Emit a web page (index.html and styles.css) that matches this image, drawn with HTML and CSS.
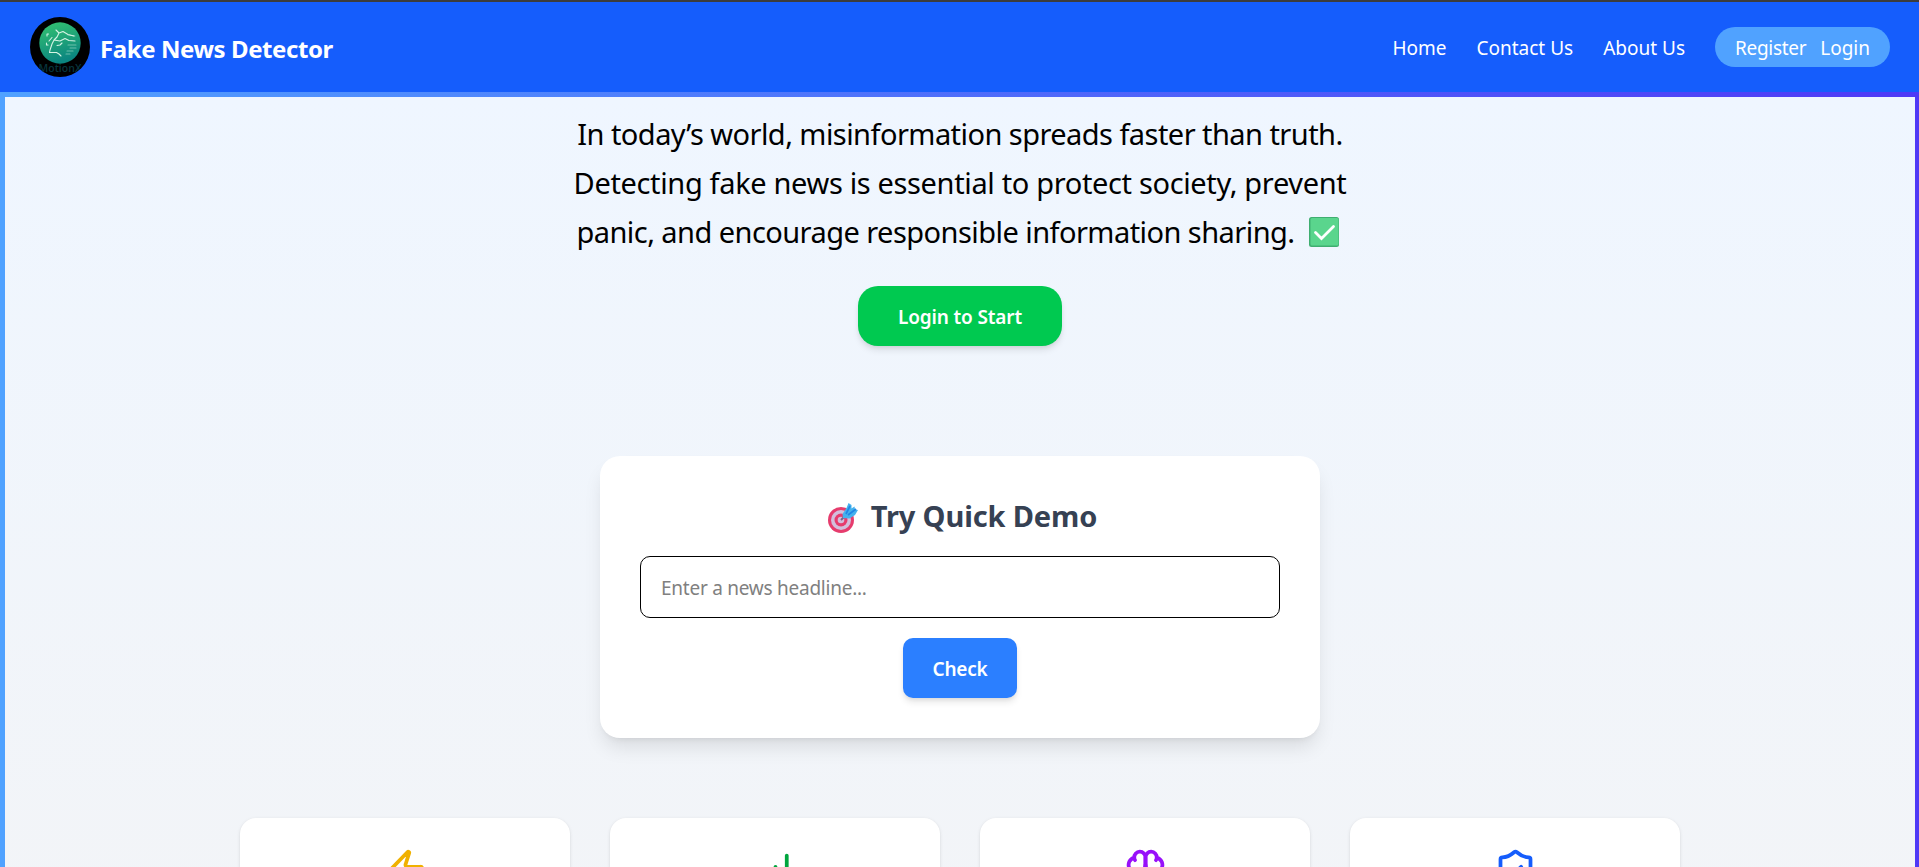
FILE: index.html
```html
<!DOCTYPE html>
<html lang="en">
<head>
<meta charset="utf-8">
<title>Fake News Detector</title>
<link rel="stylesheet" href="styles.css">
</head>
<body>
<nav class="nav">
  <div class="brand">
    <svg class="logo" viewBox="0 0 60 60">
      <defs>
        <linearGradient id="lg" x1="0" y1="0" x2="0.3" y2="1"><stop offset="0" stop-color="#35c46f"/><stop offset="1" stop-color="#0b8680"/></linearGradient>
        <clipPath id="round"><circle cx="30" cy="30" r="30"/></clipPath>
      </defs>
      <g clip-path="url(#round)">
        <rect width="60" height="60" fill="#000"/>
        <circle cx="30" cy="26" r="20.700" fill="url(#lg)"/>
        <g fill="none" stroke="#d4f3e4" stroke-width="1.100" stroke-linecap="round" stroke-linejoin="round">
          <path d="M26 13l3 3 4-1.500 5 3 6 1.500M29 16l-2 4-3 3M24 23l6 1 5-2.500 4 2 6 .5M22 20.500l-3 3.500M17 19v-2h1.500M16.500 26v2h1.500M24 23l-2 4-2 6-.5 2.500h7l2.500 1.500 2 2M27 28.500l3-.5 2-2"/>
          <path d="M38 18l7 1M38 28h8M40 31h6M37 34h6M36 37h4" opacity=".45"/>
        </g>
        <text class="logo-text" x="30" y="55" text-anchor="middle" textLength="43">MotionX</text>
      </g>
    </svg>
    <span class="brand-name">Fake News Detector</span>
  </div>
  <div class="links">
    <a class="link">Home</a><a class="link">Contact Us</a><a class="link">About Us</a>
    <div class="pill"><a class="link register">Register</a><a class="link">Login</a></div>
  </div>
</nav>
<main class="frame">
  <div class="page">
    <section class="hero">
      <p class="lead"><span class="line l1">In today’s world, misinformation spreads faster than truth.</span><span class="line l2">Detecting fake news is essential to protect society, prevent</span><span class="line l3">panic, and encourage responsible information sharing.<svg class="check" viewBox="0 0 30 30"><rect width="30" height="30" rx="2.500" fill="#3fae70"/><rect x="1.500" y="1" width="28" height="27.500" rx="1.500" fill="#5ad58d"/><path d="M6.500 15.500l6 6 12-12" fill="none" stroke="#fff" stroke-width="2.800" stroke-linecap="round"/></svg></span></p>
      <button class="start">Login to Start</button>
    </section>
    <section class="demo">
      <h2 class="demo-title">
        <svg class="target" viewBox="0 0 30 30"><circle cx="13" cy="17" r="13" fill="#e63c6d"/><circle cx="13" cy="17" r="10" fill="#d3bfdc"/><circle cx="13" cy="17" r="6.500" fill="#e63c6d"/><circle cx="13" cy="17" r="3.300" fill="#d3bfdc"/><path d="M13 17l5-5" stroke="#76648c" stroke-width="2"/><path d="M15 15l-.5-4 4-6 2-5 3 2v3.500l3-2 .5 3 3 .5-3 5-5.500 3.500z" fill="#45b2ed"/><path d="M18 11l4-8M20 12l8-6" stroke="#2086e5" stroke-width="1.700"/></svg>
        <span>Try Quick Demo</span></h2>
      <input class="field" type="text" placeholder="Enter a news headline...">
      <button class="check-btn">Check</button>
    </section>
    <section class="features">
      <div class="card"><svg class="icon yellow" viewBox="0 0 24 24"><path d="M4 14a1 1 0 0 1-.78-1.630l9.900-10.200a.5.5 0 0 1 .86.460l-1.920 6.020A1 1 0 0 0 13 10h7a1 1 0 0 1 .78 1.630l-9.900 10.200a.5.5 0 0 1-.86-.460l1.920-6.020A1 1 0 0 0 11 14z"/></svg></div>
      <div class="card"><svg class="icon green" viewBox="0 0 24 24"><path d="M12 20V10M18 20V4M6 20v-4"/></svg></div>
      <div class="card"><svg class="icon purple" viewBox="0 0 24 24"><path d="M12 5a3 3 0 1 0-5.997.125 4 4 0 0 0-2.526 5.770 4 4 0 0 0 .556 6.588A4 4 0 1 0 12 18Z"/><path d="M12 5a3 3 0 1 1 5.997.125 4 4 0 0 1 2.526 5.770 4 4 0 0 1-.556 6.588A4 4 0 1 1 12 18Z"/><path d="M15 13a4.500 4.500 0 0 1-3-4 4.500 4.500 0 0 1-3 4M17.599 6.500a3 3 0 0 0 .399-1.375M6.003 5.125A3 3 0 0 0 6.401 6.500"/></svg></div>
      <div class="card"><svg class="icon blue" viewBox="0 0 24 24"><path d="M20 13c0 5-3.500 7.500-7.660 8.950a1 1 0 0 1-.67-.010C7.500 20.500 4 18 4 13V6a1 1 0 0 1 1-1c2 0 4.500-1.200 6.240-2.720a1.170 1.170 0 0 1 1.520 0C14.510 3.810 17 5 19 5a1 1 0 0 1 1 1z"/><path d="m9 12 2 2 4-4"/></svg></div>
    </section>
  </div>
</main>
</body>
</html>
```
FILE: styles.css
```css
* { box-sizing: border-box; }
html { height: 100%; overflow: hidden; }
body { margin: 0; height: 100%; overflow: hidden; display: flex; flex-direction: column; font-family: "Noto Sans", "Open Sans", sans-serif; }
.nav { height: 92px; flex: none; border-top: 2px solid #3c3c3c; background: #155dfc; padding: 0 29px 0 30px; display: flex; align-items: center; justify-content: space-between; color: #fff; }
.brand { display: flex; align-items: center; gap: 10px; }
.logo { width: 60px; height: 60px; display: block; }
.logo-text { font: 600 10.500px "Open Sans", sans-serif; fill: #07343c; }
.brand-name { font-size: 24px; font-weight: 700; letter-spacing: -0.420px; white-space: nowrap; padding-top: 2px; }
.links { display: flex; align-items: center; gap: 30px; }
.link { font-size: 19px; line-height: 30px; white-space: nowrap; padding-top: 2px; }
.register { letter-spacing: -0.300px; }
.pill { width: 175px; height: 40px; padding: 0 20px; border-radius: 20px; background: #50a2ff; display: flex; align-items: center; justify-content: space-between; }
.frame { flex: 1; min-height: 0; overflow: hidden; padding: 5px 4px 0 5px; background: linear-gradient(to right, #50a2ff, #4f39f6); }
.page { height: 100%; overflow: hidden; background: linear-gradient(#eff6ff, #f3f4f6 960px); display: flex; flex-direction: column; align-items: center; }
.hero { flex: none; display: flex; flex-direction: column; align-items: center; padding-top: 13px; }
.lead { margin: 0; font-size: 29px; text-align: center; color: #000; }
.line { display: block; height: 48.750px; line-height: 48.750px; white-space: nowrap; }
.l1 { letter-spacing: -0.550px; }
.l2 { letter-spacing: -0.350px; }
.l3 { letter-spacing: -0.550px; }
.check { width: 30px; height: 30px; vertical-align: -4px; margin: 0 5px 0 14px; }
.start { margin-top: 29.750px; width: 204px; height: 60px; border: 0; border-radius: 20px; background: #00c950; color: #fff; padding: 1px 0 0; font: 600 19px "Noto Sans", sans-serif; letter-spacing: -0.150px; box-shadow: 0 5px 7.500px -1.250px rgba(0,0,0,.1), 0 2.500px 5px -2.500px rgba(0,0,0,.1); }
.demo { flex: none; margin-top: 110px; width: 720px; height: 282px; background: #fff; border-radius: 20px; padding: 40px; display: flex; flex-direction: column; align-items: center; box-shadow: 0 12.500px 18.750px -3.750px rgba(0,0,0,.1), 0 5px 7.500px -5px rgba(0,0,0,.1); }
.demo-title { margin: 0 0 20px; padding: 0 0 0 5px; height: 40px; display: flex; align-items: center; gap: 13px; font-size: 29px; line-height: 38px; letter-spacing: -0.130px; color: #364153; white-space: nowrap; }
.target { width: 30px; height: 30px; margin-top: 3px; }
.field { width: 640px; height: 62px; flex: none; border: 1px solid #000; border-radius: 10px; background: #fff; padding: 1px 20px 0; font: 19px "Noto Sans", sans-serif; letter-spacing: -0.250px; }
.field::placeholder { color: #808080; }
.check-btn { margin-top: 20px; width: 114px; height: 60px; flex: none; border: 0; border-radius: 10px; background: #2b7fff; color: #fff; padding: 1px 0 0; font: 600 19px "Noto Sans", sans-serif; letter-spacing: -0.200px; box-shadow: 0 5px 7.500px -1.250px rgba(0,0,0,.1), 0 2.500px 5px -2.500px rgba(0,0,0,.1); }
.features { flex: none; margin-top: 80px; display: grid; grid-template-columns: repeat(4, 330px); gap: 40px; }
.card { height: 260px; padding-top: 30px; background: #fff; border-radius: 16px; display: flex; justify-content: center; box-shadow: 0 1.250px 3.750px rgba(0,0,0,.1), 0 1.250px 2.500px -1.250px rgba(0,0,0,.1); }
.icon { width: 45px; height: 45px; fill: none; stroke: currentColor; stroke-width: 2; stroke-linecap: round; stroke-linejoin: round; }
.yellow { color: #f0b100; }
.green { color: #00a63e; }
.purple { color: #9810fa; }
.blue { color: #155dfc; }
```
